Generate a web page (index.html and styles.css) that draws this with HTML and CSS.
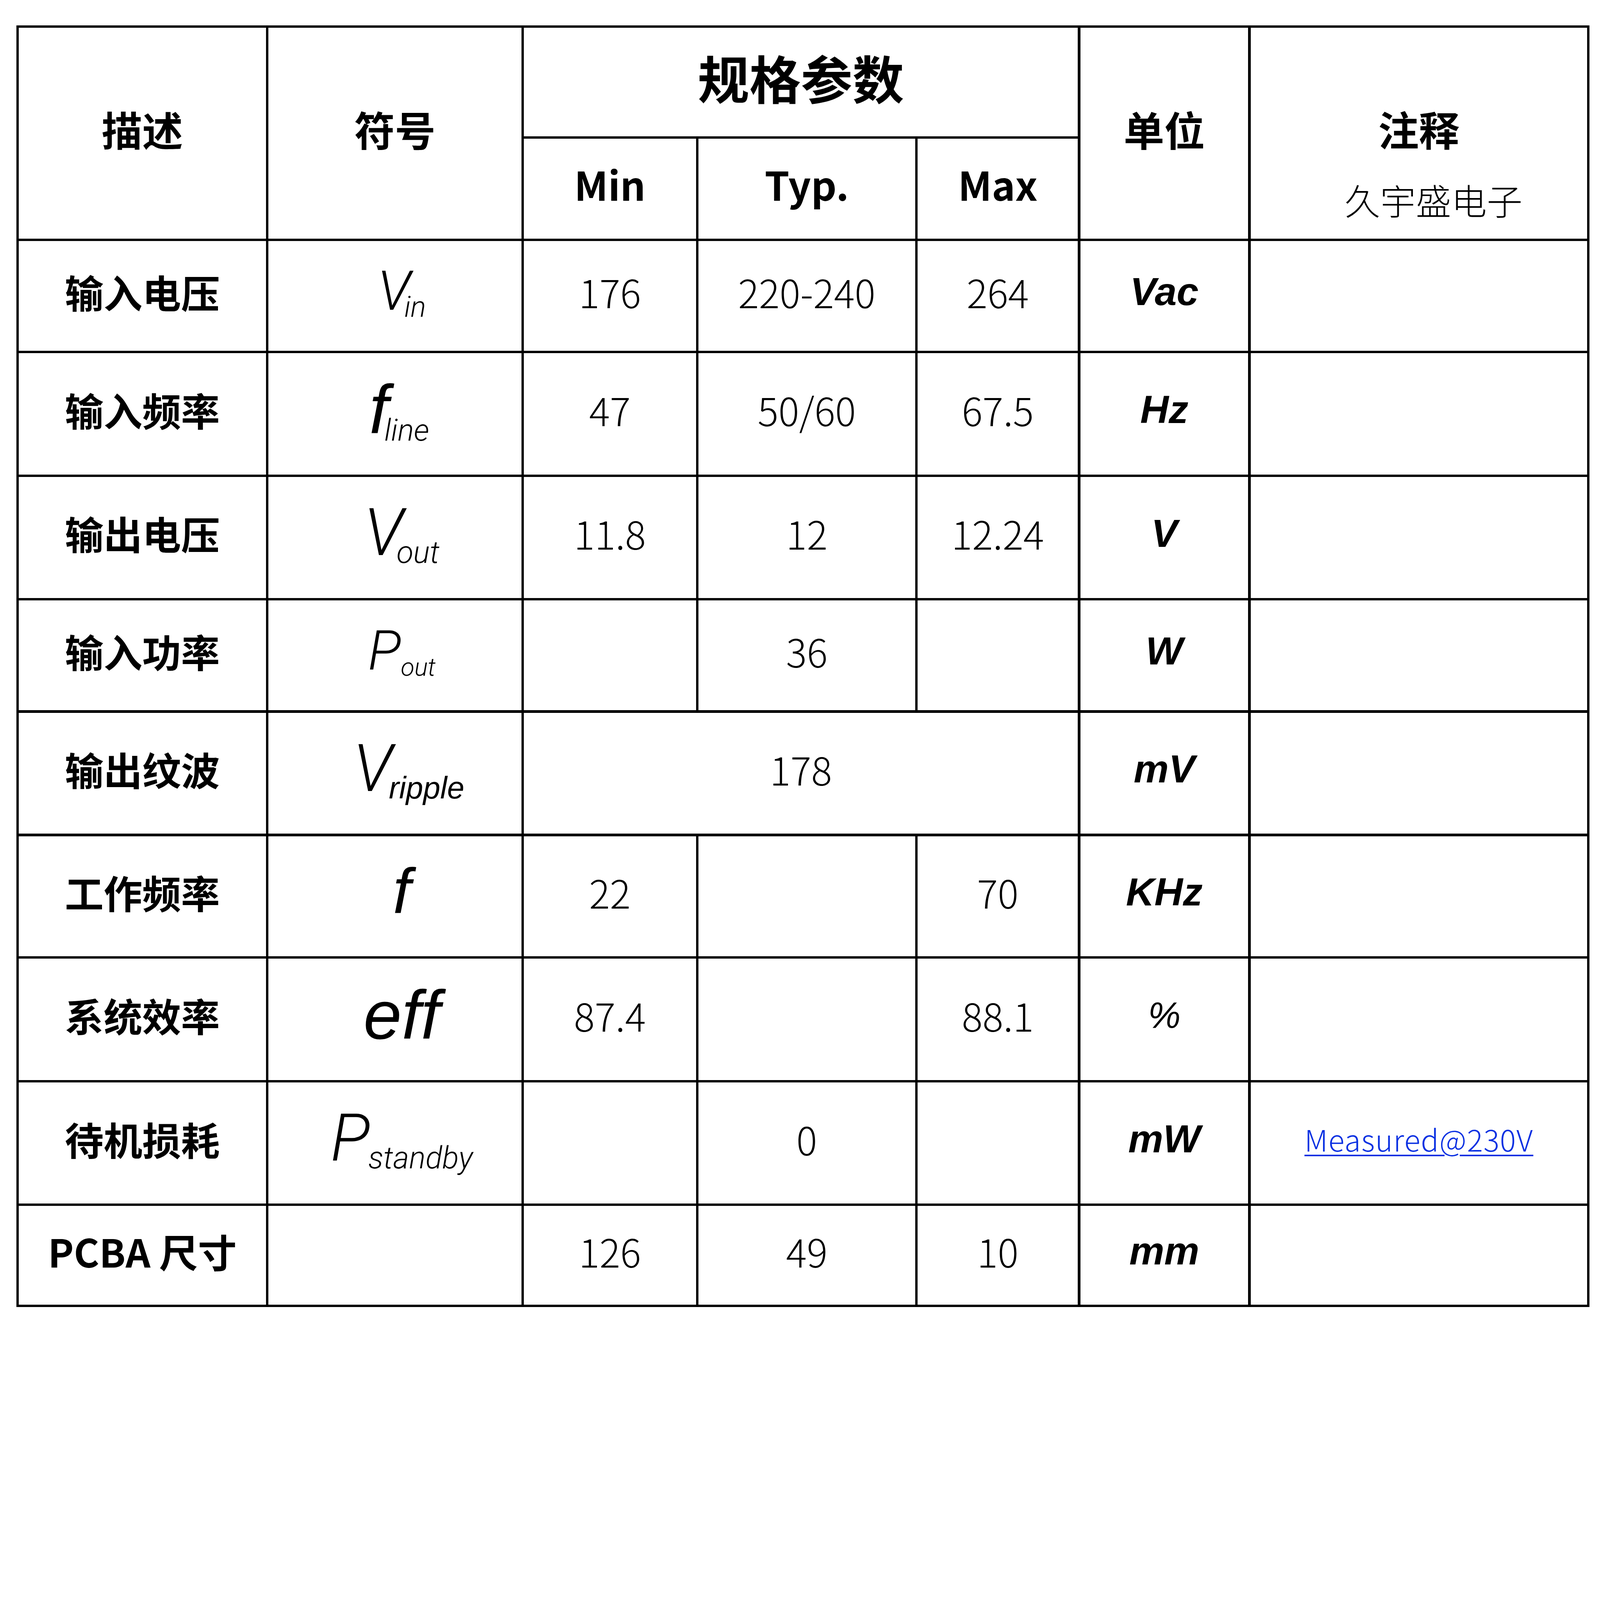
FILE: index.html
```html
<!DOCTYPE html>
<html lang="zh-CN">
<head>
<meta charset="utf-8">
<title>规格参数</title>
<link rel="stylesheet" href="styles.css">
</head>
<body>
<div class="sheet">
  <div class="cell head r2">描述</div>
  <div class="cell head r2">符号</div>
  <div class="cell head head-big c3">规格参数</div>
  <div class="cell head r2">单位</div>
  <div class="cell head r2 note-head"><span class="note-title">注释</span><span class="note-sub">久宇盛电子</span></div>
  <div class="cell colhead">Min</div>
  <div class="cell colhead">Typ.</div>
  <div class="cell colhead">Max</div>

  <div class="cell label">输入电压</div>
  <div class="cell sym"><span class="sym-text"><span class="m m-vin">V</span><span class="s s-vin">in</span></span></div>
  <div class="cell num">176</div>
  <div class="cell num">220-240</div>
  <div class="cell num">264</div>
  <div class="cell unit">Vac</div>
  <div class="cell"></div>

  <div class="cell label">输入频率</div>
  <div class="cell sym sym-fline"><span class="sym-text"><span class="m m-fline">f</span><span class="s s-fline">line</span></span></div>
  <div class="cell num">47</div>
  <div class="cell num">50/60</div>
  <div class="cell num">67.5</div>
  <div class="cell unit">Hz</div>
  <div class="cell"></div>

  <div class="cell label">输出电压</div>
  <div class="cell sym"><span class="sym-text"><span class="m m-vout">V</span><span class="s s-vout">out</span></span></div>
  <div class="cell num">11.8</div>
  <div class="cell num">12</div>
  <div class="cell num">12.24</div>
  <div class="cell unit">V</div>
  <div class="cell"></div>

  <div class="cell label">输入功率</div>
  <div class="cell sym"><span class="sym-text"><span class="m m-pout">P</span><span class="s s-pout">out</span></span></div>
  <div class="cell num"></div>
  <div class="cell num">36</div>
  <div class="cell num"></div>
  <div class="cell unit">W</div>
  <div class="cell"></div>

  <div class="cell label">输出纹波</div>
  <div class="cell sym sym-rip"><span class="sym-text"><span class="m m-vrip">V</span><span class="s s-vrip">ripple</span></span></div>
  <div class="cell num c3">178</div>
  <div class="cell unit">mV</div>
  <div class="cell"></div>

  <div class="cell label">工作频率</div>
  <div class="cell sym"><span class="sym-text"><span class="m m-f">f</span></span></div>
  <div class="cell num">22</div>
  <div class="cell num"></div>
  <div class="cell num">70</div>
  <div class="cell unit">KHz</div>
  <div class="cell"></div>

  <div class="cell label">系统效率</div>
  <div class="cell sym"><span class="sym-text"><span class="m m-eff">eff</span></span></div>
  <div class="cell num">87.4</div>
  <div class="cell num"></div>
  <div class="cell num">88.1</div>
  <div class="cell unit unit-thin">%</div>
  <div class="cell"></div>

  <div class="cell label">待机损耗</div>
  <div class="cell sym"><span class="sym-text"><span class="m m-pstb">P</span><span class="s s-pstb">standby</span></span></div>
  <div class="cell num"></div>
  <div class="cell num">0</div>
  <div class="cell num"></div>
  <div class="cell unit">mW</div>
  <div class="cell"><a class="link" href="#">Measured@230V</a></div>

  <div class="cell label">PCBA 尺寸</div>
  <div class="cell sym"></div>
  <div class="cell num">126</div>
  <div class="cell num">49</div>
  <div class="cell num">10</div>
  <div class="cell unit">mm</div>
  <div class="cell"></div>
</div>
</body>
</html>
```

FILE: styles.css
```css
html, body {
  margin: 0;
  padding: 0;
  background: #ffffff;
}

body {
  color: #000000;
  font-family: "Noto Sans CJK SC", "Noto Sans", sans-serif;
}

.sheet {
  display: grid;
  grid-template-columns: 633px 647.4px 440.6px 554.8px 410.3px 429.5px 861.3px;
  grid-template-rows: 277.8px 255.4px 281px 310.5px 309.7px 281px 309.7px 307.3px 310.5px 309.7px 252.3px;
  gap: 6.386px;
  padding: 6.386px;
  background: #000000;
  width: max-content;
  margin: 64.66px 0 0 41.5px;
}

.cell {
  background: #ffffff;
  display: flex;
  align-items: center;
  justify-content: center;
  white-space: nowrap;
  line-height: 1;
  box-sizing: border-box;
  padding-bottom: 22px;
}

.r2 { grid-row: span 2; }
.c3 { grid-column: span 3; }

.head {
  font: 700 104px/1 "Noto Sans CJK SC", sans-serif;
}

.head-big {
  font-size: 132px;
  padding-bottom: 26px;
}

.note-head {
  flex-direction: column;
  justify-content: flex-start;
  padding-top: 206px;
  padding-bottom: 0;
}

.note-title {
  display: block;
}

.note-sub {
  display: block;
  margin-top: 84px;
  margin-left: 75px;
  font: 300 91px/1 "Noto Sans CJK SC", sans-serif;
}

.colhead {
  font: 700 101.6px/1 "Noto Sans CJK SC", sans-serif;
  padding-bottom: 26px;
}

.label {
  font: 700 99.2px/1 "Noto Sans CJK SC", sans-serif;
}

.num {
  font: 300 99.2px/1 "Noto Sans CJK SC", sans-serif;
}

.unit {
  font: italic 700 100.8px/1 "Liberation Sans", Arial, sans-serif;
}

.unit-thin {
  font-weight: 400;
  font-size: 94px;
}

.link {
  font: 300 76px/1 "Noto Sans CJK SC", sans-serif;
  letter-spacing: 1.5px;
  color: #0a30e2;
  text-decoration: underline;
  text-decoration-thickness: 4px;
  text-underline-offset: 8px;
}

/* symbol column */
.sym {
  padding-left: 35px;
  padding-bottom: 24px;
}

.sym-rip {
  padding-left: 71px;
}

.sym-fline {
  padding-left: 22px;
}

.sym-text {
  display: inline-block;
  line-height: 1;
  font-family: Roboto, "Open Sans", sans-serif;
  font-style: italic;
  font-weight: 300;
}

.m {
  line-height: 1;
}

.s {
  line-height: 0;
  vertical-align: -0.25em;
}

.m-vin { font-size: 141.6px; }
.s-vin { font-size: 74px; margin-left: -0.22em; }

.m-fline {
  font: italic 400 176px/1 "Liberation Sans", Arial, sans-serif;
}
.s-fline { font-size: 78px; margin-left: -0.13em; }

.m-vout { font-size: 168px; }
.s-vout { font-size: 79px; margin-left: -0.22em; }

.m-pout { font-size: 141px; }
.s-pout { font-size: 64px; margin-left: 0; }

.m-vrip { font-size: 168px; }
.s-vrip {
  font: italic 400 79px/0 "Liberation Sans", Arial, sans-serif;
  margin-left: -0.12em;
}

.m-f {
  font: italic 400 164px/1 "Liberation Sans", Arial, sans-serif;
}

.m-eff {
  font: italic 400 176px/1 "Liberation Sans", Arial, sans-serif;
}

.m-pstb { font-size: 168px; }
.s-pstb { font-size: 79px; margin-left: -0.05em; }
```
